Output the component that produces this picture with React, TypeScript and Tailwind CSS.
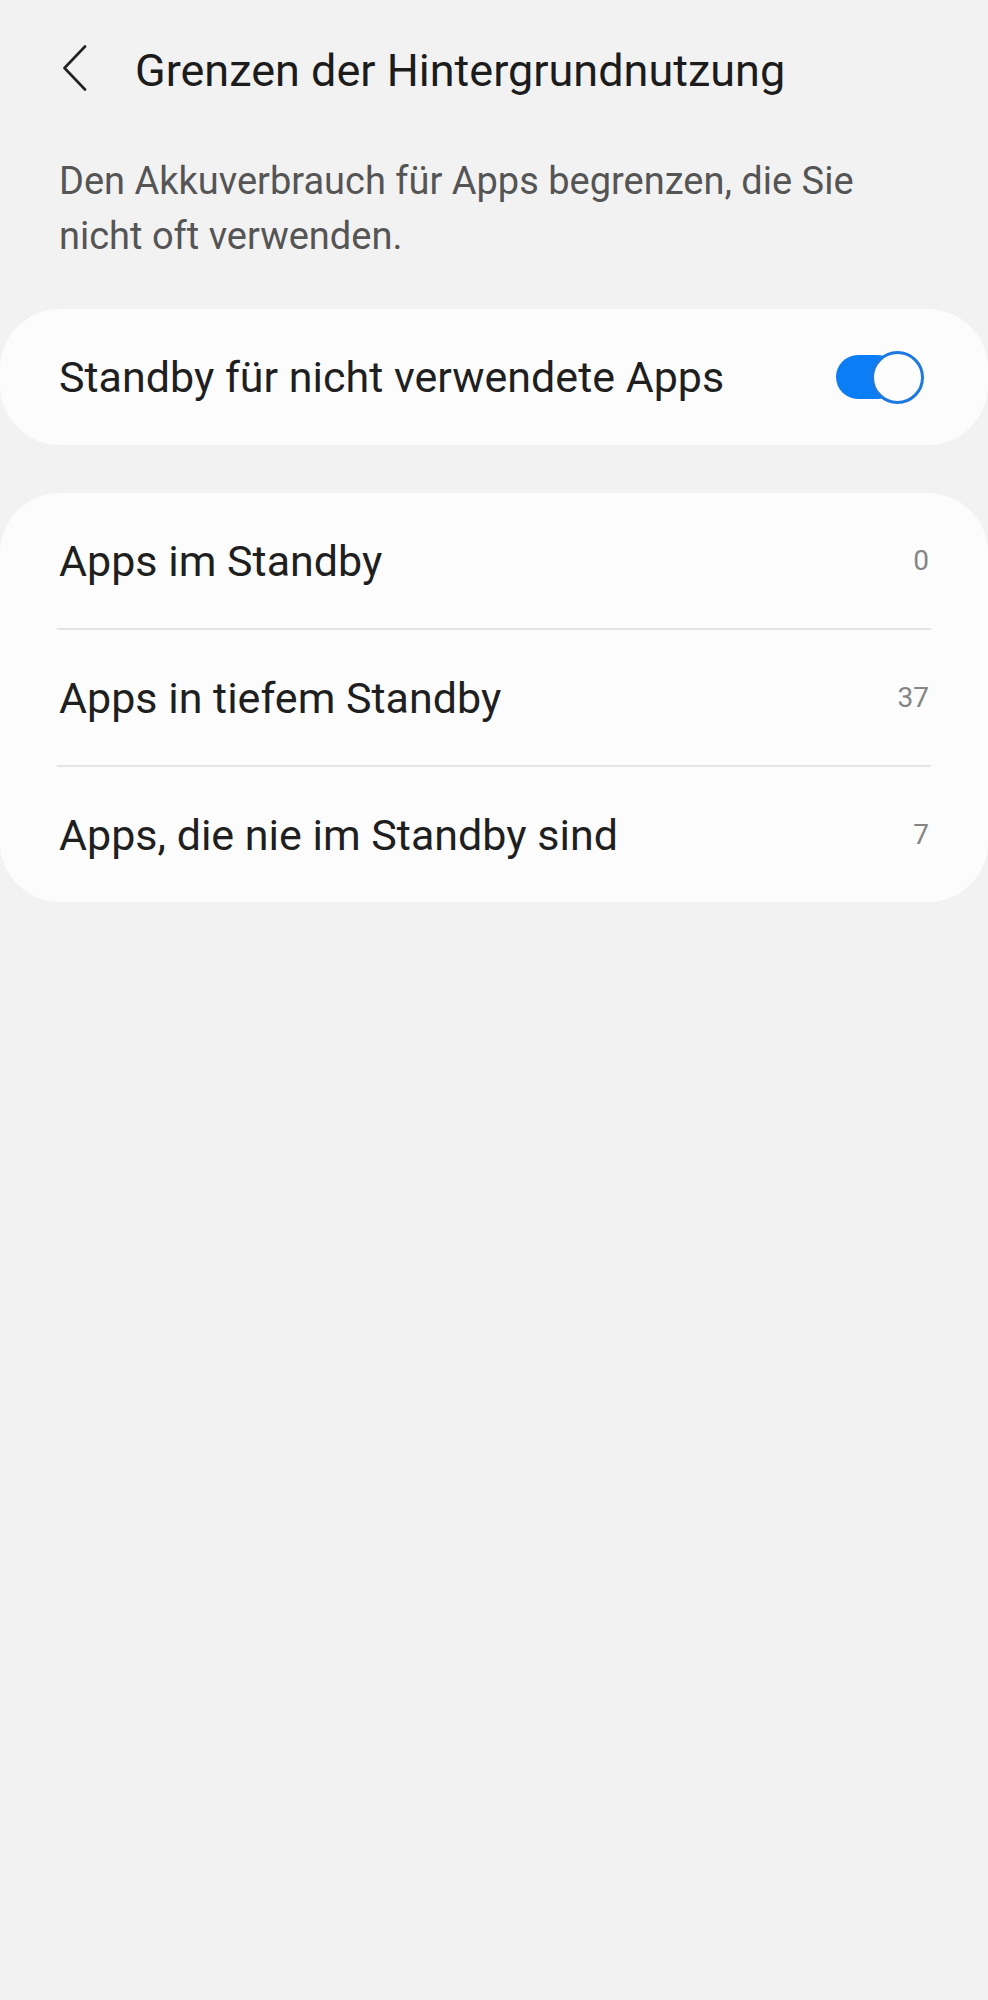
const rows = [
  { label: "Apps im Standby", count: "0" },
  { label: "Apps in tiefem Standby", count: "37" },
  { label: "Apps, die nie im Standby sind", count: "7" },
];

function Toggle() {
  return (
    <div className="relative h-[53px] w-[88px] shrink-0">
      <div className="absolute left-0 top-[4px] h-[44px] w-[64px] rounded-full bg-[#0b7ef5]" />
      <div className="absolute right-0 top-0 h-[53px] w-[53px] rounded-full border-[3px] border-[#1d79e0] bg-[#fdfdfd]" />
    </div>
  );
}

export default function App() {
  return (
    <div className="min-h-[2000px] w-full bg-[#f2f2f2] font-['Roboto',sans-serif]">
      <header className="flex items-center pl-[62px] pt-[44px]">
        <svg width="26" height="46" viewBox="0 0 26 46" className="-mt-[6px] shrink-0" fill="none">
          <path d="M23 1.5 L2.5 23 L23 44.5" stroke="#222" strokeWidth="2.6" strokeLinecap="round" strokeLinejoin="round" />
        </svg>
        <h1 className="ml-[47px] text-[45px] leading-[54px] text-[#1c1c1c]">
          Grenzen der Hintergrundnutzung
        </h1>
      </header>

      <p className="mt-[56px] pl-[59px] pr-[70px] text-[38px] leading-[55px] text-[#555555]">
        Den Akkuverbrauch für Apps begrenzen, die Sie nicht oft verwenden.
      </p>

      <section className="mt-[45px] flex h-[136px] items-center justify-between rounded-[60px] bg-[#fcfcfc] pl-[59px] pr-[64px]">
        <span className="text-[43px] leading-[50px] text-[#1f1f1f]">Standby für nicht verwendete Apps</span>
        <Toggle />
      </section>

      <section className="mt-[48px] rounded-[60px] bg-[#fcfcfc]">
        {rows.map((row, i) => (
          <div key={row.label}>
            {i > 0 && <div className="mx-[57px] h-[2px] bg-[#e4e4e4]" />}
            <div className="flex h-[135px] items-center justify-between pl-[59px] pr-[59px]">
              <span className="text-[43px] leading-[50px] text-[#1f1f1f]">{row.label}</span>
              <span className="text-[28px] leading-[34px] text-[#858585]">{row.count}</span>
            </div>
          </div>
        ))}
      </section>
    </div>
  );
}
